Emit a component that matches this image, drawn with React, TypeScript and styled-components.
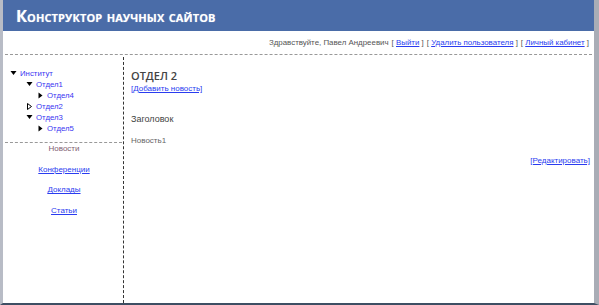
import React from "react";
import styled, { createGlobalStyle } from "styled-components";

const Global = createGlobalStyle`
  html, body { margin: 0; padding: 0; background: #fff; }
  body { font-family: "Liberation Sans", Arial, sans-serif; }
`;

const LINK = "#2a3cf0";
const TEXT = "#555";

const Frame = styled.div`
  width: 599px;
  height: 305px;
  box-sizing: border-box;
  border-left: 3px solid #b8bcc6;
  border-right: 5px solid #a9adb6;
  border-bottom: 2px solid #3e4e63;
  display: flex;
  flex-direction: column;
  background: #fff;
  overflow: hidden;
`;

const Header = styled.div`
  height: 31px;
  flex: none;
  background: #4a6ca8;
  display: flex;
  align-items: center;
  padding-left: 13px;
`;

const Title = styled.div`
  font-family: "Open Sans", "DejaVu Sans", sans-serif;
  font-variant: small-caps;
  font-weight: 700;
  font-size: 16.4px;
  color: #fff;
  letter-spacing: 0.1px;
  text-shadow: 0 0 1px rgba(255, 255, 255, 0.5);
`;

const UserBar = styled.div`
  height: 23px;
  flex: none;
  margin: 0 2px;
  border-bottom: 1px dashed #999;
  display: flex;
  align-items: center;
  justify-content: flex-end;
  padding-right: 3px;
  font-size: 7.9px;
  color: ${TEXT};
  gap: 3px;
`;

const Link = styled.a`
  color: ${LINK};
  text-decoration: underline;
  cursor: pointer;
`;

const Body = styled.div`
  flex: 1;
  display: grid;
  grid-template-columns: 121px 1fr;
  margin-top: 2px;
`;

const Side = styled.div`
  border-right: 1px dashed #333;
  display: flex;
  flex-direction: column;
  margin-left: 2px;
`;

const Tree = styled.ul`
  list-style: none;
  margin: 0 1px 0 0;
  padding: 11px 0 8px 0;
  border-bottom: 1px dashed #999;
`;

const INDENT = [0, 16, 27];

const Node = styled.li<{ $level: number }>`
  height: 11px;
  display: flex;
  align-items: center;
  padding-left: ${(p) => 4 + INDENT[p.$level]}px;
  font-size: 7.8px;
  color: #3a36f2;
`;

const Arrow = styled.span`
  width: 9px;
  display: inline-flex;
  justify-content: center;
  margin-right: 2px;
`;

const Menu = styled.nav`
  display: flex;
  flex-direction: column;
  align-items: center;
`;

const MenuItem = styled.a<{ $active?: boolean }>`
  height: 20.7px;
  font-size: 8px;
  line-height: 12px;
  color: ${(p) => (p.$active ? "#806070" : LINK)};
  text-decoration: ${(p) => (p.$active ? "none" : "underline")};
`;

const Main = styled.div`
  padding: 12px 4px 0 7px;
  display: flex;
  flex-direction: column;
  color: ${TEXT};
`;

const Section = styled.h1`
  margin: 0;
  font-size: 11px;
  font-weight: 600;
  color: #444;
  font-family: "Open Sans", "DejaVu Sans", sans-serif;
  line-height: 14px;
`;

const Small = styled.div<{ $right?: boolean; $gap?: number }>`
  font-size: 8px;
  line-height: 11px;
  margin-top: ${(p) => p.$gap ?? 0}px;
  text-align: ${(p) => (p.$right ? "right" : "left")};
`;

const Heading = styled.div`
  margin-top: 19px;
  font-size: 9px;
  line-height: 12px;
  color: #444;
`;

const NewsText = styled.div`
  margin-top: 10px;
  font-size: 8px;
  line-height: 11px;
  color: #666;
`;

const Tri = ({ dir, hollow }: { dir: "down" | "right"; hollow?: boolean }) => (
  <svg width="7" height="7" viewBox="0 0 7 7">
    {dir === "down" ? (
      <polygon points="0.5,1 6.5,1 3.5,5" fill="#000" />
    ) : (
      <polygon
        points="1.5,0.5 5.5,3.5 1.5,6.5"
        fill={hollow ? "#fff" : "#000"}
        stroke="#000"
        strokeWidth={hollow ? 1 : 0}
      />
    )}
  </svg>
);

const tree: { label: string; level: number; dir: "down" | "right"; hollow?: boolean }[] = [
  { label: "Институт", level: 0, dir: "down" },
  { label: "Отдел1", level: 1, dir: "down" },
  { label: "Отдел4", level: 2, dir: "right" },
  { label: "Отдел2", level: 1, dir: "right", hollow: true },
  { label: "Отдел3", level: 1, dir: "down" },
  { label: "Отдел5", level: 2, dir: "right" },
];

export default function App() {
  return (
    <>
      <Global />
      <Frame>
        <Header>
          <Title>Конструктор научных сайтов</Title>
        </Header>
        <UserBar>
          <span>Здравствуйте, Павел Андреевич</span>
          <span>
            [ <Link>Выйти</Link> ]
          </span>
          <span>
            [ <Link>Удалить пользователя</Link> ]
          </span>
          <span>
            [ <Link>Личный кабинет</Link> ]
          </span>
        </UserBar>
        <Body>
          <Side>
            <Tree>
              {tree.map((n) => (
                <Node key={n.label} $level={n.level}>
                  <Arrow>
                    <Tri dir={n.dir} hollow={n.hollow} />
                  </Arrow>
                  {n.label}
                </Node>
              ))}
            </Tree>
            <Menu>
              <MenuItem $active>Новости</MenuItem>
              <MenuItem>Конференции</MenuItem>
              <MenuItem>Доклады</MenuItem>
              <MenuItem>Статьи</MenuItem>
            </Menu>
          </Side>
          <Main>
            <Section>ОТДЕЛ 2</Section>
            <Small>
              <Link>[Добавить новость]</Link>
            </Small>
            <Heading>Заголовок</Heading>
            <NewsText>Новость1</NewsText>
            <Small $right $gap={9}>
              <Link>[Редактировать]</Link>
            </Small>
          </Main>
        </Body>
      </Frame>
    </>
  );
}
